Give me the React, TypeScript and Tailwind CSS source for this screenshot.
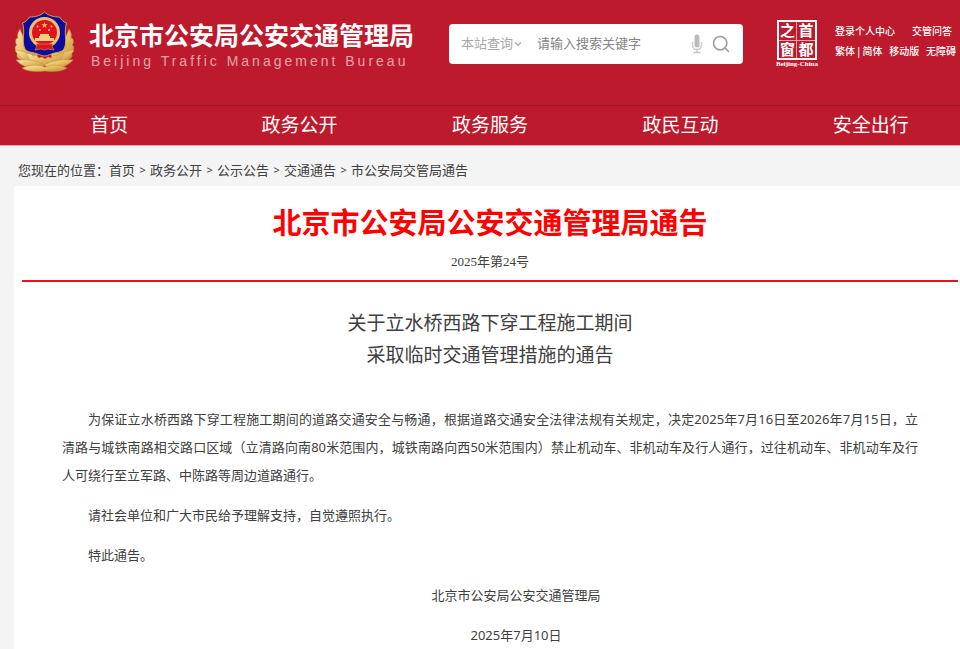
import { FormEvent, useState } from 'react';
import { ChevronDown, Search } from 'lucide-react';

const NAV = ['首页', '政务公开', '政务服务', '政民互动', '安全出行'];
const CRUMBS = ['首页', '政务公开', '公示公告', '交通通告', '市公安局交管局通告'];

function Emblem() {
  return (
    <svg viewBox="0 0 66 66" className="w-[66px] h-[66px] shrink-0" role="img" aria-label="警徽">
      <defs>
        <linearGradient id="gold" x1="0" y1="0" x2="1" y2="1">
          <stop offset="0" stopColor="#f9e9b4" />
          <stop offset="0.5" stopColor="#e6bd62" />
          <stop offset="1" stopColor="#c08a30" />
        </linearGradient>
      </defs>
      {/* 松枝 */}
      <g fill="url(#gold)" stroke="#bd8c3a" strokeWidth="0.5">
        <path d="M8 19c-2 3-3 6-2 9-3 0-3 5-1 7-3 1-2 6 1 8-2 2-1 5 2 6l16 6 2-12-12-9z" />
        <path d="M57 19c2 3 3 6 2 9 3 0 3 5 1 7 3 1 2 6-1 8 2 2 1 5-2 6l-16 6-2-12 12-9z" />
        <path d="M3 40c9 1 20 4 25 13-10 1-21-4-25-13z" />
        <path d="M62 40c-9 1-20 4-25 13 10 1 21-4 25-13z" />
        <path d="M14 43l5 1 2 2 3-1 3 3 3-1 3 2 3-2 3 1 3-3 3 1 2-2 5-1-6 12H20z" />
        <path d="M4 50c10-1 21 0 29 5-9 6-22 3-29-5z" />
        <path d="M61 50c-10-1-21 0-29 5 9 6 22 3 29-5z" />
        <path d="M10 58c7-3 16-4 23-1 7-3 16-2 22 1-6 4-14 4-22 3-8 1-17 1-23-3z" />
      </g>
      <path
        d="M32.500 2c4 4 10 5 15 5 2 3 4 5 7 6-3 9 1 17-2 25-2 5-9 4-13 6-3 1-5 2-7 2s-4-1-7-2c-4-2-11-1-13-6-3-8 1-16-2-25 3-1 5-3 7-6 5 0 11-1 15-5z"
        fill="#0c0ca0"
        stroke="#d2a24c"
        strokeWidth="1"
      />
      <circle cx="32.500" cy="22.500" r="15.500" fill="#e8c070" />
      <circle cx="32.500" cy="22.500" r="12.500" fill="#e2121c" />
      <path d="M32.500 12l.8 2.200h2.400l-1.900 1.500.7 2.300-2-1.400-2 1.400.7-2.300-1.900-1.500h2.400z" fill="#f4c95a" />
      <g fill="#f4c95a">
        <circle cx="25.500" cy="16.500" r="1" />
        <circle cx="28" cy="20" r="1" />
        <circle cx="39.500" cy="16.500" r="1" />
        <circle cx="37" cy="20" r="1" />
      </g>
      <path d="M28 24h9v2h1v2h4v3H23v-3h4v-2h1z" fill="#f0cf80" />
      <path d="M24 34h17l-1 2 2 4-6-1-3.500 1-3.500-1-6 1 2-4z" fill="#d8141c" stroke="#d9a050" strokeWidth="0.600" />
    </svg>
  );
}

function CapitalWindow() {
  return (
    <a href="#capital" className="flex flex-col items-center shrink-0 w-11 text-white">
      <span className="grid grid-cols-2 w-10 h-10 border-2 border-white font-bold text-[15px] leading-[17px] text-center">
        <span className="border-r border-b border-white/60">之</span>
        <span className="border-b border-white/60">首</span>
        <span className="border-r border-white/60">窗</span>
        <span>都</span>
      </span>
      <span className="font-['Liberation_Serif',serif] font-bold text-[7px] leading-[8px] whitespace-nowrap">
        Beijing-China
      </span>
    </a>
  );
}

function SearchBox() {
  const [keyword, setKeyword] = useState('');
  const onSubmit = (e: FormEvent) => e.preventDefault();

  return (
    <form
      onSubmit={onSubmit}
      className="flex items-center w-[294px] h-10 shrink-0 rounded-[4px] bg-white px-3 text-[13px]"
    >
      <div className="relative flex items-center w-[62px] shrink-0 text-[#a8a8a8]">
        <select aria-label="查询范围" className="appearance-none w-full bg-transparent outline-none">
          <option>本站查询</option>
        </select>
        <ChevronDown className="absolute right-0 w-2.5 h-2.5 pointer-events-none" strokeWidth={3} />
      </div>
      <input
        type="text"
        aria-label="搜索关键字"
        placeholder="请输入搜索关键字"
        value={keyword}
        onChange={(e) => setKeyword(e.target.value)}
        className="flex-1 min-w-0 ml-3.5 bg-transparent outline-none placeholder:text-[#858585]"
      />
      <button type="button" aria-label="语音输入" className="mr-2">
        <svg viewBox="0 0 12 20" className="w-3 h-5">
          <rect x="3.500" y="0.500" width="5" height="13" rx="2.500" fill="#bcbcbc" />
          <path d="M1.500 8v3.500a4.500 4 0 0 0 9 0V8" fill="none" stroke="#cfcfcf" strokeWidth="1.600" />
          <path d="M6 15.500v3M2.500 18.500h7" fill="none" stroke="#c4c4c4" strokeWidth="1.400" />
        </svg>
      </button>
      <button type="submit" aria-label="搜索">
        <Search className="w-5 h-5 text-[#a0a0a0]" strokeWidth={2} />
      </button>
    </form>
  );
}

export default function App() {
  return (
    <div className="flex flex-col min-h-screen overflow-hidden bg-[#f4f4f4] font-['Noto_Sans','Noto_Sans_CJK_SC',sans-serif] text-[#404040]">
      <header className="bg-[#bd1b2d] text-white">
        <div className="flex items-start h-[105px] pl-3">
          <div className="flex shrink-0 pt-2.5">
            <Emblem />
            <div className="ml-[11px] pt-2">
              <h1 className="font-bold text-[25px] leading-[34px] whitespace-nowrap">
                北京市公安局公安交通管理局
              </h1>
              <p className="pl-0.5 font-['Liberation_Sans',sans-serif] text-[14px] leading-[18px] tracking-[3px] whitespace-nowrap text-white/60">
                Beijing Traffic Management Bureau
              </p>
            </div>
          </div>
          <div className="ml-auto flex shrink-0 pt-5 pr-1">
            <div className="pt-1">
              <SearchBox />
            </div>
            <div className="ml-8">
              <CapitalWindow />
            </div>
            <div className="ml-4 pt-px w-[121px] text-[10px] leading-5 font-medium whitespace-nowrap">
              <div className="flex justify-between pr-1">
                <a href="#me">登录个人中心</a>
                <a href="#qa">交管问答</a>
              </div>
              <div className="flex justify-between">
                <span className="flex gap-px">
                  <a href="#hant">繁体</a>|<a href="#hans">简体</a>
                </span>
                <a href="#mobile">移动版</a>
                <a href="#a11y">无障碍</a>
              </div>
            </div>
          </div>
        </div>
        <nav className="border-t border-[#a01828] border-b border-b-[#e0a3a9]">
          <ul className="grid grid-cols-5 ml-3.5 -mr-1.5 text-[19px] leading-[39px] text-center">
            {NAV.map((item) => (
              <li key={item}>
                <a href="#nav">{item}</a>
              </li>
            ))}
          </ul>
        </nav>
      </header>

      <nav aria-label="当前位置" className="flex pl-[18px] pt-[14px] pb-1.5 text-[13px] leading-5">
        <span>您现在的位置：</span>
        <ol className="flex">
          {CRUMBS.map((crumb, i) => (
            <li key={crumb} className="flex">
              {i > 0 && <span className="w-[15px] text-center text-[11px]">&gt;</span>}
              <a href="#crumb">{crumb}</a>
            </li>
          ))}
        </ol>
      </nav>

      <main className="flex-1 ml-3.5 bg-white pl-2 pr-0.5">
        <div className="border-b-2 border-[#f01018] pt-4 pb-2 text-center">
          <h2 className="font-bold text-[29px] leading-[42px] text-[#ff0000]">北京市公安局公安交通管理局通告</h2>
          <p className="mt-2 font-['Liberation_Serif','Noto_Sans_CJK_SC',serif] text-[13px] leading-5">
            2025年第24号
          </p>
        </div>
        <article className="px-10 pt-[25px] text-[13px] leading-7">
          <h3 className="mb-[34px] text-[19px] leading-8 text-center">
            关于立水桥西路下穿工程施工期间
            <br />
            采取临时交通管理措施的通告
          </h3>
          <div className="flex flex-col gap-3">
            <p className="indent-[26px] text-justify">
              为保证立水桥西路下穿工程施工期间的道路交通安全与畅通，根据道路交通安全法律法规有关规定，决定2025年7月16日至2026年7月15日，立清路与城铁南路相交路口区域（立清路向南80米范围内，城铁南路向西50米范围内）禁止机动车、非机动车及行人通行，过往机动车、非机动车及行人可绕行至立军路、中陈路等周边道路通行。
            </p>
            <p className="indent-[26px]">请社会单位和广大市民给予理解支持，自觉遵照执行。</p>
            <p className="indent-[26px]">特此通告。</p>
            <p className="indent-[52px] text-center">北京市公安局公安交通管理局</p>
            <p className="indent-[52px] text-center">2025年7月10日</p>
          </div>
        </article>
      </main>
    </div>
  );
}
